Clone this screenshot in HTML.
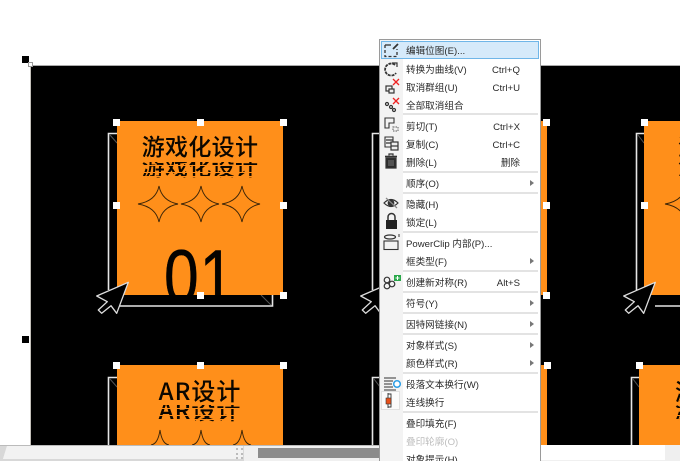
<!DOCTYPE html>
<html><head><meta charset="utf-8">
<style>
html,body{margin:0;padding:0;background:#fff}
#p{position:relative;width:680px;height:461px;overflow:hidden;background:#fff;font-family:"Liberation Sans","Noto Sans CJK SC",sans-serif}
#p div{position:absolute}
.h{width:7px;height:7px;background:#fff;box-sizing:border-box}
.c{background:#ff8f1a;overflow:hidden}
.t{color:#0c0700;font-size:23px;line-height:28px;white-space:nowrap;font-family:"Noto Sans CJK SC",sans-serif;font-weight:500;text-align:center}
.r{color:#0c0700;font-size:23px;line-height:7px;white-space:nowrap;font-family:"Noto Sans CJK SC",sans-serif;text-align:center;overflow:hidden;font-weight:500;
-webkit-mask-image:linear-gradient(180deg,#000 0,#000 3px,transparent 3px,transparent 3.800px,#000 3.800px,#000 10px,transparent 10px,transparent 11px,#000 11px,#000 14px,transparent 14px,transparent 15px,#000 15px,#000 18px)}
.m{left:406px;margin-top:1.5px;font-size:9.6px;line-height:14px;color:#2a2a2a;white-space:nowrap;filter:blur(.35px)}
.k{margin-top:1.5px;font-size:9.6px;line-height:14px;color:#2a2a2a;white-space:nowrap;text-align:right;right:160px;filter:blur(.35px)}
.s{left:403px;width:135px;height:2px;background:#e3e3e3}
.a{left:530px;width:0;height:0;margin-top:1px;border-left:4px solid #777;border-top:3.5px solid transparent;border-bottom:3.5px solid transparent}
</style></head><body>
<div id="p">
<div style="left:31px;top:65px;width:649px;height:380px;background:#000;border-top:1px solid #aaa;box-sizing:border-box"></div>
<div style="left:30px;top:65px;width:1px;height:380px;background:#c4c0ba"></div>

<svg style="position:absolute;left:0;top:0" width="680" height="445" viewBox="0 0 680 445">
<g fill="none" stroke="#e6e6e6" stroke-width="1.6">
<path d="M117 133.500H108.500V290"/><path d="M118 306H272.500V295"/>
<path d="M380 133.500H372.500V290"/><path d="M380 306H540"/>
<path d="M644 133.500H636.500V290"/><path d="M655 306H680"/>
<path d="M117 377.500H108.500V445"/><path d="M380 377.500H372.500V445"/><path d="M639 377.500H631.500V445"/>
</g>
<g stroke="#555" stroke-width="1" fill="none">
<path d="M110 135L117 143"/><path d="M261 295L271 305"/><path d="M638 135L644 143"/><path d="M110 379L117 387"/><path d="M633 379L639 387"/><path d="M374 379L380 387"/>
</g>
</svg>

<!-- Card 1 -->
<div class="c" style="left:117px;top:121px;width:166px;height:174px">
<div class="t" style="left:0;top:10px;width:166px;letter-spacing:.3px">游戏化设计</div>
<div class="r" style="left:0;top:41px;width:166px;height:18px;letter-spacing:.3px">游戏化设计</div>
<svg style="position:absolute;left:0;top:0" width="166" height="174" fill="none" stroke="#3a2408" stroke-width=".9">
<path d="M42 65Q45 80 61 83Q45 86 42 101Q39 86 21 83Q39 80 42 65Z"/>
<path d="M84 65Q87 80 102 83Q87 86 84 101Q81 86 64 83Q81 80 84 65Z"/>
<path d="M125 65Q128 80 143 83Q128 86 125 101Q122 86 105 83Q122 80 125 65Z"/>
</svg>
<div style="left:47px;top:112px;font-size:76px;line-height:90px;color:#050300;transform:scaleX(.82);transform-origin:0 0;white-space:nowrap;letter-spacing:1px;-webkit-text-stroke:.5px #050300">01</div>
</div>

<!-- Card top middle -->
<div class="c" style="left:380px;top:121px;width:167px;height:174px"></div>
<!-- Card top right -->
<div class="c" style="left:644px;top:121px;width:36px;height:174px">
<div class="t" style="left:34px;top:10px;width:120px;text-align:left">游戏化设计</div>
<div class="r" style="left:34px;top:41px;width:120px;height:18px;text-align:left">游戏化设计</div>
<svg style="position:absolute;left:0;top:0" width="36" height="174" fill="none" stroke="#3a2408" stroke-width=".9"><path d="M42 65Q39 80 21 83Q39 86 42 101"/></svg>
</div>

<!-- Card 2 -->
<div class="c" style="left:117px;top:365px;width:166px;height:80px">
<div class="t" style="left:0;top:11px;width:166px;letter-spacing:1px;font-size:24px">AR设计</div>
<div class="r" style="left:0;top:40px;width:166px;height:18px;letter-spacing:1px;font-size:24px">AR设计</div>
<svg style="position:absolute;left:0;top:0" width="166" height="80" fill="none" stroke="#3a2408" stroke-width=".9">
<path d="M43 65Q45 79 52 80M43 65Q41 79 34 80M84 65Q86 79 93 80M84 65Q82 79 75 80M125 65Q127 79 134 80M125 65Q123 79 116 80"/>
</svg>
</div>
<div class="c" style="left:380px;top:365px;width:167px;height:80px"></div>
<div class="c" style="left:639px;top:365px;width:41px;height:80px">
<div class="t" style="left:36px;top:11px;width:80px;text-align:left">游戏</div>
<div class="r" style="left:36px;top:40px;width:80px;height:18px;text-align:left">游戏</div>
</div>

<!-- Cursors -->
<svg style="position:absolute;left:0;top:0" width="680" height="445" viewBox="0 0 680 445">
<g fill="#000" stroke="#ddd" stroke-width="1.3" stroke-linejoin="round">
<path d="M128.300 282.300L96.700 296L107.300 301.700L98.300 310L101.700 313.300L111 305.700L116.700 313.300Z"/>
<path d="M392.300 282.300L360.700 296L371.300 301.700L362.300 310L365.700 313.300L375 305.700L380.700 313.300Z"/>
<path d="M655.300 282.300L623.700 296L634.300 301.700L625.300 310L628.700 313.300L638 305.700L643.700 313.300Z"/>
</g>
</svg>

<!-- Handles -->
<div class="h" style="left:113px;top:119px"></div><div class="h" style="left:197px;top:119px"></div><div class="h" style="left:280px;top:119px"></div>
<div class="h" style="left:113px;top:202px"></div><div class="h" style="left:280px;top:202px"></div>
<div class="h" style="left:197px;top:292px"></div><div class="h" style="left:280px;top:292px"></div>
<div class="h" style="left:543px;top:119px"></div><div class="h" style="left:543px;top:202px"></div><div class="h" style="left:543px;top:292px"></div>
<div class="h" style="left:641px;top:119px"></div><div class="h" style="left:641px;top:202px"></div>
<div class="h" style="left:113px;top:362px"></div><div class="h" style="left:197px;top:362px"></div><div class="h" style="left:280px;top:362px"></div>
<div class="h" style="left:544px;top:362px"></div><div class="h" style="left:636px;top:362px"></div>

<div style="left:22px;top:56px;width:7px;height:7px;background:#000"></div>
<div style="left:28px;top:62px;width:5px;height:5px;background:#fff;border:1px solid #999;box-sizing:border-box"></div>
<div style="left:22px;top:336px;width:7px;height:7px;background:#000"></div>

<!-- Bottom bar -->
<div style="left:0;top:445px;width:680px;height:16px;background:#f0f0f0;border-top:1px solid #bbb;box-sizing:border-box"></div>
<svg style="position:absolute;left:0;top:445px" width="245" height="16"><path d="M0 16V1H7L3 14H243V1H244V16Z" fill="#d8d8d8"/><path d="M7 1H243V14H3Z" fill="#f2f2f2"/></svg>
<div style="left:236px;top:448px;width:3px;height:11px;border-left:2px dotted #bbb;border-right:2px dotted #bbb"></div>
<div style="left:258px;top:448px;width:122px;height:10px;background:#8c8c8c"></div>
<div style="left:541px;top:445px;width:124px;height:15px;background:#fff"></div>
<div style="left:665px;top:445px;width:15px;height:16px;background:#efefef"></div>

<!-- Menu -->
<div style="left:379px;top:39px;width:162px;height:430px;background:#fff;border:1px solid #9a9a9a;box-sizing:border-box"></div>
<div style="left:380px;top:40px;width:23px;height:421px;background:#f3f3f3"></div>
<div style="left:381px;top:41px;width:158px;height:18px;background:#d6eafa;border:1px solid #70b6e8;box-sizing:border-box"></div>
<div style="left:381px;top:391px;width:19px;height:19px;background:#fbfbfb;border:1px solid #e0e0e0;box-sizing:border-box"></div>

<div class="s" style="top:113px"></div><div class="s" style="top:171px"></div><div class="s" style="top:192px"></div><div class="s" style="top:231px"></div><div class="s" style="top:270px"></div><div class="s" style="top:291px"></div><div class="s" style="top:312px"></div><div class="s" style="top:333px"></div><div class="s" style="top:372px"></div><div class="s" style="top:411px"></div>

<div class="m" style="top:43px">编辑位图(E)...</div>
<div class="m" style="top:62px">转换为曲线(V)</div><div class="k" style="top:62px">Ctrl+Q</div>
<div class="m" style="top:80px">取消群组(U)</div><div class="k" style="top:80px">Ctrl+U</div>
<div class="m" style="top:98px">全部取消组合</div>
<div class="m" style="top:119px">剪切(T)</div><div class="k" style="top:119px">Ctrl+X</div>
<div class="m" style="top:137px">复制(C)</div><div class="k" style="top:137px">Ctrl+C</div>
<div class="m" style="top:155px">删除(L)</div><div class="k" style="top:155px">删除</div>
<div class="m" style="top:176px">顺序(O)</div><div class="a" style="top:179px"></div>
<div class="m" style="top:197px">隐藏(H)</div>
<div class="m" style="top:215px">锁定(L)</div>
<div class="m" style="top:236px">PowerClip 内部(P)...</div>
<div class="m" style="top:254px">框类型(F)</div><div class="a" style="top:257px"></div>
<div class="m" style="top:275px">创建新对称(R)</div><div class="k" style="top:275px">Alt+S</div>
<div class="m" style="top:296px">符号(Y)</div><div class="a" style="top:299px"></div>
<div class="m" style="top:317px">因特网链接(N)</div><div class="a" style="top:320px"></div>
<div class="m" style="top:338px">对象样式(S)</div><div class="a" style="top:341px"></div>
<div class="m" style="top:356px">颜色样式(R)</div><div class="a" style="top:359px"></div>
<div class="m" style="top:377px">段落文本换行(W)</div>
<div class="m" style="top:395px">连线换行</div>
<div class="m" style="top:416px">叠印填充(F)</div>
<div class="m" style="top:434px;color:#bdbdbd">叠印轮廓(O)</div>
<div class="m" style="top:452px">对象提示(H)</div>

<!-- Menu icons -->
<svg style="position:absolute;left:380px;top:40px" width="24" height="380" viewBox="0 0 24 380" fill="none" stroke="#333" stroke-width="1.2">
<path d="M5 5V16.500H17V9" stroke-width="1.300" stroke-dasharray="3 2"/><path d="M5 5H11" stroke-width="1.300"/><path d="M13 9L18 4" stroke-width="1.800"/>
<path d="M15 25A6 6 0 1 0 16 33" stroke-width="1.800" stroke-dasharray="3 .9"/><path d="M12 23H17V27" stroke-width="1.200"/>
<rect x="6" y="46" width="6" height="5"/><rect x="9" y="49" width="5" height="4" fill="#eee"/><path d="M13 39L19 45M19 39L13 45" stroke="#e22" stroke-width="1.300"/>
<circle cx="7" cy="64" r="1.500"/><circle cx="11" cy="67" r="1.500"/><circle cx="14" cy="70" r="1.500"/><path d="M13 58L19 64M19 58L13 64" stroke="#e22" stroke-width="1.300"/>
<path d="M5 78H14V83H9V88H5Z" stroke-width="1.100"/><rect x="13" y="87" width="5" height="4" stroke="#777" stroke-dasharray="1.500 1"/>
<path d="M5 97H13V107H5Z" stroke-width="1.100"/><path d="M6 100H13M6 103H13"/><rect x="11" y="102" width="7" height="8" fill="#eee"/><path d="M11 106H18"/>
<path d="M5 116.500H17" stroke-width="1.600"/><path d="M9 115.500V114H13V115.500"/><path d="M6 118H16V128H6Z" fill="#2c2c2c"/><path d="M9 120V126M11 120V126M13 120V126" stroke="#999" stroke-width=".7"/>
<path d="M4 163Q11 156 18 163Q11 170 4 163Z"/><circle cx="11" cy="163" r="2.800" fill="#333"/><path d="M6 158L17 168" stroke="#888"/>
<rect x="6" y="180" width="11" height="9" fill="#222" stroke="none"/><path d="M8 180V177A3.500 3.500 0 0 1 15 177V180" stroke-width="1.500"/>
<rect x="4" y="201" width="14" height="8.500" stroke-width="1.100"/><ellipse cx="10" cy="197" rx="5.500" ry="2"/><path d="M19 194V197" stroke-width="1"/>
<circle cx="7" cy="240" r="2.800"/><circle cx="12" cy="244" r="2.800"/><circle cx="7" cy="246" r="2.800"/>
<rect x="14" y="235" width="7" height="6" fill="#2aa84a" stroke="none"/><path d="M15.500 238H19.500M17.500 236V240" stroke="#fff" stroke-width="1"/>
<path d="M4 338H16M4 341H13M4 344H12M4 347H13M4 350H16" stroke-width=".9"/><circle cx="17" cy="344" r="3.300" stroke="#2e9fe6" stroke-width="1.500" fill="#fff"/>
<path d="M8 353V358M8 364V368M8 354H11V367H8" stroke-width=".9"/><rect x="6" y="358" width="5" height="6" fill="#e8501a" stroke="#333" stroke-width=".6"/>
</svg>
</div>
</body></html>
